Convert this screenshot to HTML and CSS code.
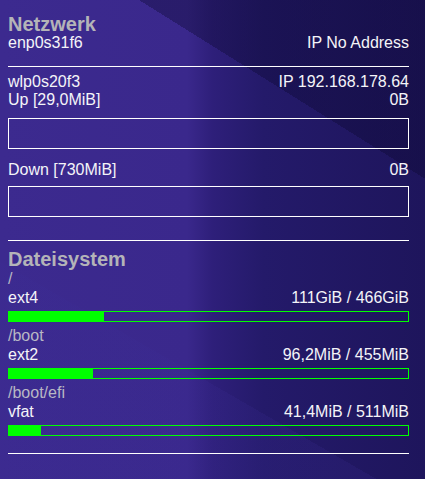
FILE: index.html
```html
<!DOCTYPE html>
<html>
<head>
<meta charset="utf-8">
<link rel="stylesheet" href="styles.css">
</head>
<body>
<div class="panel">
  <section class="net">
    <h2 class="title">Netzwerk</h2>
    <div class="row"><span>enp0s31f6</span><span>IP No Address</span></div>
    <div class="hr hr-a"></div>
    <div class="row row-wlp"><span>wlp0s20f3</span><span>IP 192.168.178.64</span></div>
    <div class="row"><span>Up [29,0MiB]</span><span>0B</span></div>
    <div class="graph graph-up"></div>
    <div class="row row-down"><span>Down [730MiB]</span><span>0B</span></div>
    <div class="graph graph-down"></div>
    <div class="hr hr-b"></div>
  </section>
  <section class="fs">
    <h2 class="title">Dateisystem</h2>
    <div class="mount">
      <div class="row row-fs label">/</div>
      <div class="row row-fs"><span>ext4</span><span>111GiB / 466GiB</span></div>
      <div class="bar"><div class="fill" style="width:23.8%"></div></div>
    </div>
    <div class="mount mount-next">
      <div class="row row-fs label">/boot</div>
      <div class="row row-fs"><span>ext2</span><span>96,2MiB / 455MiB</span></div>
      <div class="bar"><div class="fill" style="width:21.1%"></div></div>
    </div>
    <div class="mount mount-next">
      <div class="row row-fs label">/boot/efi</div>
      <div class="row row-fs"><span>vfat</span><span>41,4MiB / 511MiB</span></div>
      <div class="bar"><div class="fill" style="width:8.1%"></div></div>
    </div>
    <div class="hr hr-c"></div>
  </section>
</div>
</body>
</html>
```

FILE: styles.css
```css
html, body {
  margin: 0;
  padding: 0;
  width: 425px;
  height: 479px;
  overflow: hidden;
}
body {
  background-color: #2a1d74;
  background-image:
    linear-gradient(212deg, rgba(10,6,45,0.35) 0 24%, rgba(0,0,0,0) 24%),
    linear-gradient(30deg, rgba(60,45,150,0.18) 0 30%, rgba(0,0,0,0) 30%),
    linear-gradient(to right, #3c2a8f 0%, #3a288c 44%, #2e1f7a 50%, #241a6a 62%, #1e155c 100%);
  font-family: "Liberation Sans", Arial, sans-serif;
  font-size: 16px;
  color: #f4f4f8;
}
.panel {
  width: 401px;
  padding: 14px 0 0 8px;
}
.title {
  margin: 0;
  font-size: 20px;
  line-height: 20px;
  font-weight: bold;
  color: #b4b4b8;
}
.row {
  display: flex;
  justify-content: space-between;
  line-height: 18px;
  height: 18px;
  white-space: nowrap;
}
.row-fs {
  line-height: 19px;
  height: 19px;
}
.label {
  color: #b8b8c4;
}
.hr {
  height: 1px;
  background: #ffffff;
}
.hr-a { margin: 14px 0 6px; }
.hr-b { margin: 23px 0 8px; }
.hr-c { margin-top: 17px; }
.graph {
  height: 29px;
  border: 1px solid #ffffff;
}
.graph-up { margin-top: 9px; }
.row-down { margin-top: 12px; }
.graph-down { margin-top: 7px; }
.mount-next { margin-top: 4px; }
.bar {
  margin-top: 4px;
  height: 9px;
  border: 1px solid #00ff00;
}
.fill {
  height: 100%;
  background: #00ff00;
}
```
